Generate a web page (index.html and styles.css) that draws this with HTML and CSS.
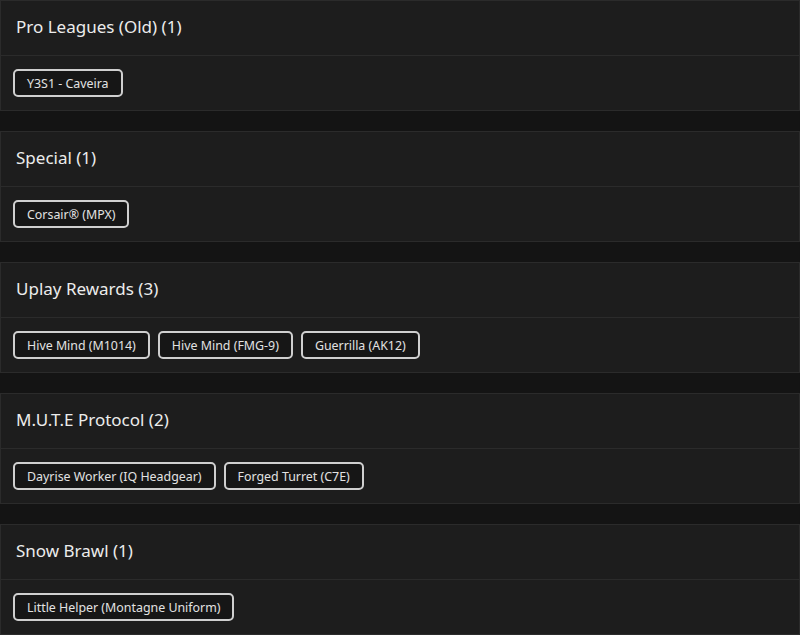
FILE: index.html
```html
<!DOCTYPE html>
<html>
<head>
<meta charset="utf-8">
<link rel="stylesheet" href="styles.css">
</head>
<body>
<div class="list">
  <section class="card">
    <div class="card-head">Pro Leagues (Old) (1)</div>
    <div class="card-body">
      <span class="chip">Y3S1 - Caveira</span>
    </div>
  </section>
  <section class="card">
    <div class="card-head">Special (1)</div>
    <div class="card-body">
      <span class="chip">Corsair® (MPX)</span>
    </div>
  </section>
  <section class="card">
    <div class="card-head">Uplay Rewards (3)</div>
    <div class="card-body">
      <span class="chip">Hive Mind (M1014)</span>
      <span class="chip">Hive Mind (FMG-9)</span>
      <span class="chip">Guerrilla (AK12)</span>
    </div>
  </section>
  <section class="card">
    <div class="card-head">M.U.T.E Protocol (2)</div>
    <div class="card-body">
      <span class="chip">Dayrise Worker (IQ Headgear)</span>
      <span class="chip">Forged Turret (C7E)</span>
    </div>
  </section>
  <section class="card">
    <div class="card-head">Snow Brawl (1)</div>
    <div class="card-body">
      <span class="chip">Little Helper (Montagne Uniform)</span>
    </div>
  </section>
</div>
</body>
</html>
```
FILE: styles.css
```css
html, body {
  margin: 0;
  padding: 0;
  background: #141414;
  font-family: "Noto Sans", "Open Sans", sans-serif;
  color: #e6e6e6;
}
.list {
  display: flex;
  flex-direction: column;
  gap: 20px;
}
.card {
  background: #1d1d1d;
  border: 1px solid #2b2b2b;
}
.card-head {
  height: 55px;
  box-sizing: border-box;
  display: flex;
  align-items: center;
  padding: 0 0 3px 15px;
  font-size: 17px;
  font-weight: 400;
  color: #ececec;
  border-bottom: 1px solid #2b2b2b;
}
.card-body {
  height: 54px;
  box-sizing: border-box;
  padding: 13px 12px;
  display: flex;
  gap: 8px;
  align-items: flex-start;
}
.chip {
  height: 28px;
  box-sizing: border-box;
  display: inline-flex;
  align-items: center;
  padding: 0 12px;
  border: 2px solid #cfcfcf;
  border-radius: 5px;
  background: #161616;
  font-size: 12.4px;
  color: #e2e2e2;
  white-space: nowrap;
}
```
